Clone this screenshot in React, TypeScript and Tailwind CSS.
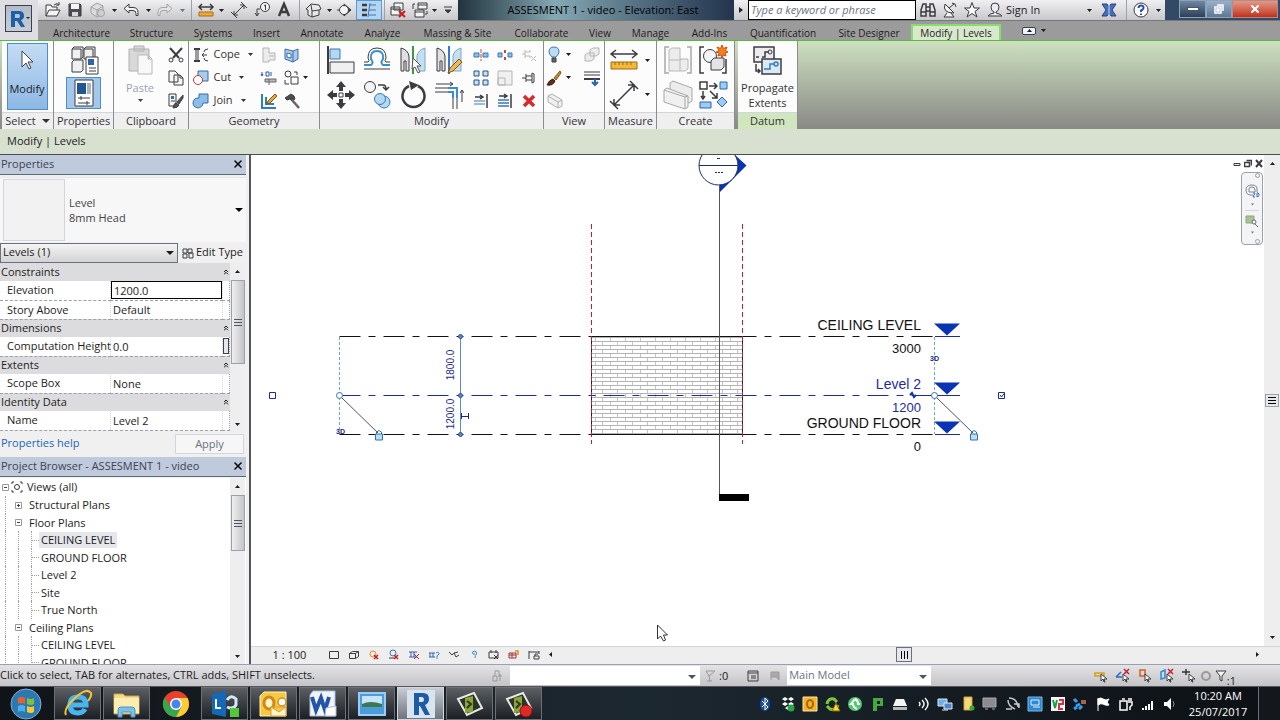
import React from "react";
import { ChevronsUp, X } from "lucide-react";

type Kids = { children?: React.ReactNode };

const Icon = ({ w = 18, h = 18, children }: Kids & { w?: number; h?: number }) => (
  <svg
    width={w}
    height={h}
    viewBox={`0 0 ${w} ${h}`}
    fill="none"
    stroke="#3c3c40"
    className="shrink-0"
    aria-hidden="true"
  >
    {children}
  </svg>
);

const Caret = ({ className = "", big = false }: { className?: string; big?: boolean }) => (
  <svg
    width={big ? 8 : 5}
    height={big ? 4 : 3}
    viewBox={big ? "0 0 8 4" : "0 0 5 3"}
    className={`shrink-0 ${className}`}
    aria-hidden="true"
  >
    <path d={big ? "M0 0h8L4 4z" : "M0 0h5L2.5 3z"} fill="currentColor" />
  </svg>
);

/* ---------- quick access toolbar ---------- */

const quickAccess = [
  {
    label: "Open",
    width: "w-[22px]",
    icon: (
      <Icon>
        <path d="M2 15V4h5l1 2h5v3M2 15l3-6h11l-3 6zM10 4q3-3 5 0M15 1v3h-3" fill="#f4f4f4" />
      </Icon>
    ),
  },
  {
    label: "Save",
    width: "w-[22px]",
    icon: (
      <Icon>
        <path d="M3 3h11l1 1v11H3z" fill="#4a4d55" />
        <path d="M5 3h8v5H5z" fill="#f4f4f4" stroke="none" />
        <path d="M6 11h6v4H6z" fill="#d8d8d8" stroke="none" />
      </Icon>
    ),
  },
  {
    label: "Synchronize",
    width: "w-[24px]",
    icon: (
      <Icon>
        <path d="M2 6l6-4 6 3v7l-6 4-6-4zM2 6l6 3 6-4M8 9v7" fill="#dcdcdc" stroke="#a0a0a4" />
        <circle cx="12" cy="12" r="3.5" fill="#d0d0d0" stroke="#a0a0a4" />
      </Icon>
    ),
  },
  { label: "Synchronize options", width: "w-[8px]", icon: <Caret /> },
  {
    label: "Undo",
    width: "w-[26px]",
    icon: (
      <Icon>
        <path d="M7 3L2 7.500l5 4.500V9.500h4q3 0 3 3v2h2v-3q0-5-5-5H7z" fill="#f4f4f4" />
      </Icon>
    ),
  },
  { label: "Undo list", width: "w-[8px]", icon: <Caret /> },
  {
    label: "Redo",
    width: "w-[26px]",
    icon: (
      <Icon>
        <path d="M11 3l5 4.500-5 4.500V9.500H7q-3 0-3 3v2H2v-3q0-5 5-5h4z" fill="#e4e4e4" stroke="#a4a4a8" />
      </Icon>
    ),
  },
  { label: "Redo list", width: "w-[8px]", icon: <Caret className="text-gray-500" /> },
  { label: "", width: "w-[10px]", icon: null },
  {
    label: "Measure",
    width: "w-[20px]",
    icon: (
      <Icon>
        <path d="M2 6h14M5 3L2 6l3 3M13 3l3 3-3 3" strokeWidth="1.500" />
        <path d="M2 11h14v4H2z" fill="#f0a830" stroke="#a86c14" />
      </Icon>
    ),
  },
  { label: "Measure options", width: "w-[10px]", icon: <Caret /> },
  {
    label: "Aligned Dimension",
    width: "w-[26px]",
    icon: (
      <Icon>
        <path d="M4 14L14 4M4 10v4h4M10 4h4v4M1 11l6 6M11 1l6 6" />
      </Icon>
    ),
  },
  {
    label: "Tag by Category",
    width: "w-[20px]",
    icon: (
      <Icon>
        <circle cx="12" cy="6" r="4.500" fill="#f4f4f4" />
        <path d="M11 5l1.500-1v5M7 8H4v6M2 12l2 3 2-3" />
      </Icon>
    ),
  },
  {
    label: "Text",
    width: "w-[24px]",
    icon: (
      <Icon>
        <path d="M4 15L9 3l5 12M6 11h6" strokeWidth="2.500" />
      </Icon>
    ),
  },
  { label: "", width: "w-[6px]", icon: null },
  {
    label: "Default 3D View",
    width: "w-[22px]",
    icon: (
      <Icon>
        <path d="M2 8l5-5 8 1 2 4-2 1v5l-7 2-4-2V9z" fill="#e8e8e8" />
        <path d="M8 16v-6l7-1M8 10L7 4" />
      </Icon>
    ),
  },
  { label: "3D view options", width: "w-[10px]", icon: <Caret /> },
  {
    label: "Section",
    width: "w-[22px]",
    icon: (
      <Icon>
        <path d="M8 3l7 6-7 6z" fill="#3c3c40" />
        <circle cx="8" cy="9" r="4.500" fill="#f4f4f4" />
        <path d="M1 9h2" />
      </Icon>
    ),
  },
  {
    label: "Thin Lines",
    width: "w-[26px]",
    pressed: true,
    icon: (
      <Icon>
        <path d="M2 4h5M2 9h5M2 14h5" strokeWidth="2.500" />
        <path d="M9 4h7M9 9h7M9 14h7M10 2L8 16" stroke="#3a78b8" />
      </Icon>
    ),
  },
  { label: "", width: "w-[4px]", icon: null },
  {
    label: "Close Hidden Windows",
    width: "w-[24px]",
    icon: (
      <Icon>
        <path d="M5 2h9v7H5zM2 6h9v8H2zM2 8h9" fill="#f4f4f4" />
        <path d="M10 10l6 6M16 10l-6 6" stroke="#c81e1e" strokeWidth="2" />
      </Icon>
    ),
  },
  {
    label: "Switch Windows",
    width: "w-[20px]",
    icon: (
      <Icon>
        <path d="M7 2h9v6H7zM4 9h9v7H4zM4 11h9M7 4h9" fill="#f4f4f4" />
        <path d="M4 3H2v5M14 13h2v-3" />
      </Icon>
    ),
  },
  { label: "Window list", width: "w-[8px]", icon: <Caret /> },
  {
    label: "Customize Quick Access Toolbar",
    width: "w-[20px]",
    icon: (
      <Icon w={8} h={8}>
        <path d="M0 1h8M1 4h6L4 7z" fill="#3c3c40" />
      </Icon>
    ),
  },
];

const infoIcons = [
  {
    label: "Search",
    icon: (
      <Icon>
        <path d="M2 9l2-6h3v12H2zM11 3h3l2 6v6h-5zM7 6h4v4H7zM2 11h5M11 11h5" fill="#e4e4e4" strokeWidth="1.500" />
      </Icon>
    ),
  },
  {
    label: "Communication Center",
    icon: (
      <Icon>
        <path d="M4 3q-3 9 9 9zM6 12l-3 4h10l-3-4" fill="#f4f4f4" />
        <path d="M8 7l5-4M11 2q4 0 4 4" />
      </Icon>
    ),
  },
  {
    label: "Favorites",
    icon: (
      <Icon>
        <path d="M9 1.500l2 5.500h5.500L12 10.500l2 5.500-5-3.500L4 16l2-5.500L1.500 7H7z" fill="#f8f8f8" />
      </Icon>
    ),
  },
];

const Titlebar = () => (
  <div className="flex h-[21px] items-stretch border-b border-[#77777a] bg-gradient-to-b from-[#f0f0f2] to-[#c8c8cc]">
    <div className="flex items-center pl-1">
      {quickAccess.map((item, index) =>
        item.icon ? (
          <button
            key={index}
            aria-label={item.label}
            className={`flex h-5 items-center justify-center ${item.width} ${
              item.pressed ? "border border-[#5a9ad4] bg-[#b4d4f0]" : ""
            }`}
          >
            {item.icon}
          </button>
        ) : (
          <span key={index} className={`flex h-5 justify-center ${item.width}`}>
            <span className="w-px bg-gray-400" />
          </span>
        ),
      )}
    </div>
    <div className="flex min-w-0 flex-1 items-center justify-center whitespace-nowrap bg-gradient-to-r from-[#22343e] via-[#86a9b4] via-35% to-[#22344c] pl-[14px] text-[11px] text-black">
      ASSESMENT 1 - video - Elevation: East
    </div>
    <button aria-label="Collapse search" className="flex w-[14px] items-center justify-center">
      <Icon w={4} h={6}>
        <path d="M0 0l4 3-4 3z" fill="#222" stroke="none" />
      </Icon>
    </button>
    <input
      aria-label="Search help"
      placeholder="Type a keyword or phrase"
      className="w-[168px] border border-black bg-white px-[2px] text-[11px] italic placeholder:text-gray-500"
    />
    <div className="flex items-center gap-1 pl-[3px]">
      {infoIcons.map((item) => (
        <button key={item.label} aria-label={item.label}>
          {item.icon}
        </button>
      ))}
    </div>
    <button className="ml-[5px] flex w-[106px] items-center gap-[2px] text-[11px]">
      <Icon>
        <path
          d="M9 2q4 0 4 4t-3 5v1q5 1 6 3H2q1-2 6-3v-1Q5 10 5 6t4-4z"
          fill="#ececf0"
        />
      </Icon>
      <span className="whitespace-nowrap">Sign In</span>
      <Caret className="ml-auto" />
    </button>
    <div className="flex items-center border-r border-gray-400 px-2">
      <button aria-label="Exchange Apps">
        <Icon>
          <path d="M2 3h5l2 3 2-3h5l-4 6 4 6h-5l-2-3-2 3H2l4-6z" fill="#4470c0" stroke="#28407c" />
          <path d="M9 3v12" stroke="#c8d8f0" />
        </Icon>
      </button>
    </div>
    <button aria-label="Help" className="flex w-[38px] items-center justify-center gap-[6px]">
      <Icon>
        <circle cx="9" cy="9" r="7" fill="#fff" />
        <path d="M6.500 7q0-2.500 2.500-2.500t2.500 2T9 9.500V11M9 12.500v1.500" stroke="#2850b0" strokeWidth="2" />
      </Icon>
      <Caret />
    </button>
    <div className="flex bg-[#324a66] pl-[14px] pr-[2px]">
      <button
        aria-label="Minimize"
        className="flex h-[18px] w-[27px] items-center justify-center border border-[#8fa3b8] bg-gradient-to-b from-[#7088a4] to-[#2c4058]"
      >
        <span className="h-1 w-3 border border-gray-600 bg-white" />
      </button>
      <button
        aria-label="Restore"
        className="flex h-[18px] w-[26px] items-center justify-center border border-[#8fa3b8] bg-gradient-to-b from-[#9ab0c8] to-[#5c7894]"
      >
        <Icon w={12} h={12}>
          <path d="M4 2h6v6M2 4h6v6H2zM4 6h2v2H4z" stroke="#fff" strokeWidth="1.500" />
        </Icon>
      </button>
      <button
        aria-label="Close"
        className="flex h-[18px] w-[46px] items-center justify-center border border-[#b88] bg-gradient-to-b from-[#e09a88] to-[#c02c18]"
      >
        <X className="size-3 text-white" strokeWidth={4} />
      </button>
    </div>
  </div>
);

const tabs = [
  { name: "Architecture", width: "w-[77px]" },
  { name: "Structure", width: "w-[63px]" },
  { name: "Systems", width: "w-[60px]" },
  { name: "Insert", width: "w-[47px]" },
  { name: "Annotate", width: "w-[64px]" },
  { name: "Analyze", width: "w-[57px]" },
  { name: "Massing & Site", width: "w-[93px]" },
  { name: "Collaborate", width: "w-[75px]" },
  { name: "View", width: "w-[42px]" },
  { name: "Manage", width: "w-[59px]" },
  { name: "Add-Ins", width: "w-[59px]" },
  { name: "Quantification", width: "w-[88px]" },
  { name: "Site Designer", width: "w-[84px]" },
];

const Header = () => (
  <header className="flex h-10 bg-[#9c9b9c]">
    <div className="flex w-[38px] shrink-0 items-start bg-[#dedee2] pl-[5px] pt-[5px]">
      <button
        aria-label="Application menu"
        className="flex size-[27px] items-center justify-center border border-gray-700 bg-gradient-to-b from-[#b4bcc8] to-[#c8ccd4]"
      >
        <Icon w={22} h={20}>
          <path
            d="M3 2h8q5 0 5 5 0 3-3 4l4 7h-4l-4-6H7v6H3zM7 5v4h4q1-1 1-2t-1-2z"
            fill="#1d5fa8"
            stroke="none"
          />
          <path d="M18 8h4l-2 2z" fill="#222" stroke="none" />
        </Icon>
      </button>
    </div>
    <div className="min-w-0 flex-1">
      <Titlebar />
      <nav className="flex h-[19px] items-stretch whitespace-nowrap pl-[5px] text-[10px]">
        {tabs.map((tab) => (
          <button key={tab.name} className={`pt-[5px] leading-[14px] text-[#1c1c1c] ${tab.width}`}>
            {tab.name}
          </button>
        ))}
        <button className="mt-[3px] w-[90px] border-2 border-b-0 border-[#86dc6c] bg-[#d8e8cc] leading-[14px]">
          Modify | Levels
        </button>
        <button aria-label="Ribbon display" className="ml-[21px] flex items-center gap-[5px]">
          <span className="flex h-2 w-[14px] items-center justify-center rounded-xs border border-gray-700 bg-gray-100">
            <Caret className="rotate-180" />
          </span>
          <Caret />
        </button>
      </nav>
    </div>
  </header>
);

/* ---------- ribbon ---------- */

const Panel = ({
  title,
  className,
  accent,
  children,
}: Kids & { title: React.ReactNode; className: string; accent?: boolean }) => (
  <section className={`flex shrink-0 flex-col border-r border-[#8c8c90] bg-[#fcfcfc] ${className}`}>
    <div className="flex h-[71px] justify-center pt-[2px]">{children}</div>
    <h2
      className={`flex h-[17px] items-center justify-center border-t border-gray-300 text-[11px] text-[#333] ${
        accent ? "bg-[#cfe6bf]" : "bg-[#efefef]"
      }`}
    >
      {title}
    </h2>
  </section>
);

const Tool = ({ label, children }: Kids & { label: string }) => (
  <button aria-label={label} className="flex items-center justify-center">
    {children}
  </button>
);

const TextTool = ({ label, children }: Kids & { label: string }) => (
  <button className="flex items-center gap-1 text-[11px] text-[#333]">
    {children}
    {label}
    <Caret className="ml-1" />
  </button>
);

const ClipboardPanel = () => (
  <Panel title="Clipboard" className="w-[75px]">
    <button className="flex w-[50px] flex-col items-center text-[11px] text-gray-400">
      <Icon w={30} h={34}>
        <path d="M4 6h20v22H4zM9 3h10v5H9z" fill="#d8d8d8" stroke="#b0b0b0" />
        <path d="M13 12h10l4 4v15H13zM23 12v4h4" fill="#f8f8f8" stroke="#b8b8b8" />
      </Icon>
      <span className="mt-[3px] leading-4">Paste</span>
      <Caret className="mt-[3px] text-gray-700" />
    </button>
    <div className="grid w-[22px] grid-rows-3">
      <Tool label="Cut">
        <Icon>
          <path d="M3 2l9 10M15 2L6 12" strokeWidth="2" />
          <circle cx="4" cy="14" r="2" />
          <circle cx="14" cy="14" r="2" />
        </Icon>
      </Tool>
      <Tool label="Copy">
        <Icon>
          <path d="M2 2h6l3 3v8H2zM7 6h6l3 3v7H7zM13 6v3h3" fill="#f8f8f8" />
        </Icon>
      </Tool>
      <Tool label="Match Type">
        <Icon>
          <path d="M2 2h7v12H2zM4 9h4" fill="#f8f8f8" />
          <path d="M4 4h3v3H4z" fill="#3a6ca8" stroke="none" />
          <path d="M16 3l-6 7 2 2 4-6zM9 11q-2 0-3 5 5 0 6-3z" fill="#555" />
        </Icon>
      </Tool>
    </div>
  </Panel>
);

const GeometryPanel = () => (
  <Panel title="Geometry" className="w-[131px]">
    <div className="grid w-[66px] grid-rows-3">
      <TextTool label="Cope">
        <Icon>
          <path d="M2 3h6M2 15h6" strokeWidth="2" />
          <path d="M4 3v12M6 3v12M10 9h5M12 7l-2 2 2 2M16 3q-4 0-4 3M16 15q-4 0-4-3" />
        </Icon>
      </TextTool>
      <TextTool label="Cut">
        <Icon>
          <path d="M6 2h10v10H6z" fill="#a8ccec" stroke="#3a6ca8" />
          <circle cx="6" cy="11" r="4.500" fill="#fff" stroke="#d03030" />
        </Icon>
      </TextTool>
      <TextTool label="Join">
        <Icon>
          <path d="M7 2h9v9h-5a5 5 0 1 1-4-5z" fill="#8cbce8" stroke="#3a6ca8" />
        </Icon>
      </TextTool>
    </div>
    <div className="grid w-[22px] grid-rows-3">
      <Tool label="Wall Joins">
        <Icon>
          <path d="M3 2h6v5h6v7H9v2H3zM9 10h5" fill="#ececec" stroke="#b4b4b4" />
        </Icon>
      </Tool>
      <Tool label="Beam Joins">
        <Icon>
          <path d="M2 3v4M1 5l1 2 1-2M6 3h3v4H6zM11 3v4" stroke="#2a5ca8" />
          <path d="M5 10h11v3H5zM9 10v6" fill="#bbb" stroke="#666" />
        </Icon>
      </Tool>
      <Tool label="Unjoin">
        <Icon>
          <path d="M2 2v14h14M6 5v7h8" stroke="#2f7cc4" strokeWidth="2" />
          <path d="M15 2l2 2-7 7-3 1 1-3z" fill="#e8a838" stroke="#7c5414" />
        </Icon>
      </Tool>
    </div>
    <div className="grid w-[37px] grid-rows-3 justify-items-start pl-[3px]">
      <Tool label="Paint face">
        <Icon>
          <path d="M2 3l8 2 5-2v10l-5 3-8-3zM10 5v11" fill="#a8ccec" stroke="#3a6ca8" />
          <path d="M4 7l4 1v4l-4-1z" fill="#fff" stroke="#3a6ca8" />
        </Icon>
      </Tool>
      <button aria-label="Split face" className="flex items-center gap-[2px]">
        <Icon>
          <circle cx="5" cy="5" r="3" />
          <path d="M8 8h7v7H8zM2 11v4h4M11 3h3v3" />
        </Icon>
        <Caret />
      </button>
      <Tool label="Demolish">
        <Icon>
          <path d="M2 6l6-4 3 2 1 3-3 2-2-2-3 1z" fill="#4c4c50" />
          <path d="M9 8l7 8" strokeWidth="2.500" stroke="#6c6460" />
        </Icon>
      </Tool>
    </div>
  </Panel>
);

const ModifyPanel = () => (
  <Panel title="Modify" className="w-[224px]">
    <div className="grid w-36 grid-cols-4 grid-rows-2">
      <Tool label="Align">
        <Icon w={30} h={30}>
          <path d="M2 1v28" strokeWidth="2" />
          <path d="M4 4h10v10H4z" fill="#b4d8f0" stroke="#3a78b8" />
          <path d="M4 17h24v11H4z" fill="#f0f0f0" />
        </Icon>
      </Tool>
      <Tool label="Offset">
        <Icon w={30} h={30}>
          <path d="M2 20h7q3-2 0-6-1-8 6-8t6 8q-3 4 0 6h7" stroke="#3a8cd0" strokeWidth="2" />
          <path d="M2 24h26M2 17h4q2-1 0-4Q6 3 15 3t9 10q-2 3 0 4h4" />
        </Icon>
      </Tool>
      <Tool label="Mirror - Pick Axis">
        <Icon w={30} h={30}>
          <path d="M3 3q7 2 8 8v15H8V16H6v10H3z" fill="#e0e0e4" />
          <path d="M27 3q-7 2-8 8v15h8z" fill="#c4e0f0" stroke="#7ca8c4" />
          <path d="M15 1v28" stroke="#3c9c3c" strokeWidth="2" />
          <path d="M15 13l8 8h-4l3 6-2 1-3-6-3 2z" fill="#fff" stroke="#555" />
        </Icon>
      </Tool>
      <Tool label="Mirror - Draw Axis">
        <Icon w={30} h={30}>
          <path d="M3 3q7 2 8 8v15H8V16H6v10H3z" fill="#e0e0e4" />
          <path d="M27 3q-7 2-8 8v15h8z" fill="#c4e0f0" stroke="#7ca8c4" />
          <path d="M15 1v28" stroke="#2f7cd0" strokeWidth="2" />
          <path d="M25 14l3 3-9 9-5 2 2-5z" fill="#f0b850" stroke="#7c5414" />
        </Icon>
      </Tool>
      <Tool label="Move">
        <Icon w={30} h={30}>
          <path
            d="M15 1l5 6h-3v4h-4V7h-3zM15 29l5-6h-3v-4h-4v4h-3zM1 15l6-5v3h4v4H7v3zM29 15l-6-5v3h-4v4h4v3z"
            fill="#3c3c40"
            stroke="none"
          />
          <path d="M13 13h4v4h-4z" />
        </Icon>
      </Tool>
      <Tool label="Copy">
        <Icon w={30} h={30}>
          <circle cx="8" cy="7" r="5.500" fill="#f4f4f4" />
          <path d="M16 5h5q3 0 3 4M21 7l3 3 3-3" strokeWidth="1.500" />
          <circle cx="22" cy="22" r="6" fill="#b4d8f0" stroke="#3a78b8" />
          <circle cx="18" cy="19" r="5.500" fill="#b4d8f0" stroke="#3a78b8" />
        </Icon>
      </Tool>
      <Tool label="Rotate">
        <Icon w={30} h={30}>
          <path d="M20 6a11 11 0 1 1-9 0" strokeWidth="2.500" />
          <path d="M11 1l10 4-8 5z" fill="#3c3c40" stroke="none" />
        </Icon>
      </Tool>
      <Tool label="Trim/Extend to Corner">
        <Icon w={30} h={30}>
          <path d="M1 8h13M1 12h13M19 18v11M23 18v11M2 4h17M16 2l3 2-3 2M28 22V10M26 13l2-3 2 3" />
          <path d="M14 8h9v10M14 12h5v6" stroke="#3a8cd0" strokeWidth="2" />
        </Icon>
      </Tool>
    </div>
    <div className="ml-[2px] grid w-[72px] grid-cols-3 grid-rows-3">
      <Tool label="Split Element">
        <Icon>
          <path d="M2 7h5v4H2zM11 7h5v4h-5z" fill="#8cc0e8" stroke="#3a78b8" />
          <path d="M9 3v12" stroke="#d04828" strokeDasharray="4 1" />
        </Icon>
      </Tool>
      <Tool label="Split with Gap">
        <Icon>
          <path d="M2 7h4v4H2zM12 7h4v4h-4z" fill="#8cc0e8" stroke="#3a78b8" />
          <path d="M9 4v3M9 11v3" stroke="#d04828" strokeWidth="2" />
        </Icon>
      </Tool>
      <Tool label="Unpin">
        <Icon>
          <path d="M2 8h3M5 4v8M5 6h5V4M5 10h5v2M11 10l5 5M16 10l-5 5" stroke="#b8b8b8" />
        </Icon>
      </Tool>
      <Tool label="Array">
        <Icon>
          <path d="M2 2h5v5H2zM11 2h5v5h-5zM2 11h5v5H2zM11 11h5v5h-5z" fill="#c8e0f4" stroke="#2a5088" />
        </Icon>
      </Tool>
      <Tool label="Scale">
        <Icon>
          <path d="M2 2h14v14H2zM2 9h7v7H2z" fill="#f0f0f0" stroke="#b4b4b4" />
        </Icon>
      </Tool>
      <Tool label="Pin">
        <Icon>
          <path d="M2 9h4M6 5v8M6 7h6M6 11h6M12 4l2 1v8l-2 1z" />
        </Icon>
      </Tool>
      <Tool label="Trim Single">
        <Icon>
          <path d="M3 5h8M8 3l3 2-3 2M15 2v14" strokeWidth="1.500" />
          <path d="M2 9h11M2 12h11" stroke="#3a78b8" />
        </Icon>
      </Tool>
      <Tool label="Trim Multiple">
        <Icon>
          <path d="M3 4h8M8 2l3 2-3 2M15 2v14" strokeWidth="1.500" />
          <path d="M2 8h11M2 11h11M2 14h11" stroke="#3a78b8" strokeWidth="1.500" />
        </Icon>
      </Tool>
      <Tool label="Delete">
        <Icon>
          <path d="M4 4l10 10M14 4L4 14" stroke="#d42a30" strokeWidth="3.500" />
        </Icon>
      </Tool>
    </div>
  </Panel>
);

const ViewPanel = () => (
  <Panel title="View" className="w-[61px]">
    <div className="grid w-[30px] grid-rows-3 justify-items-start">
      <button aria-label="Hide in View" className="flex items-center gap-1">
        <Icon w={16}>
          <path d="M8 1q5 0 5 5 0 2-3 5H6Q3 8 3 6q0-5 5-5z" fill="#bcdcf4" stroke="#3a78b8" />
          <path d="M6 12h4v4H6z" fill="#666" />
        </Icon>
        <Caret />
      </button>
      <button aria-label="Override Graphics" className="flex items-center gap-1">
        <Icon w={16}>
          <path d="M14 2L8 9l2 2 5-7z" fill="#c88c40" stroke="#7c5414" />
          <path d="M7 10q-4 1-6 6 6 1 8-4z" fill="#5c3018" stroke="#3c2010" />
        </Icon>
        <Caret />
      </button>
      <Tool label="Linework">
        <Icon>
          <path d="M2 4l4-2 10 6v6l-4 2-10-6zM2 4l10 6v6M12 10l4-2" fill="#f0f0f0" stroke="#b0b0b0" />
        </Icon>
      </Tool>
    </div>
    <div className="ml-[6px] grid w-5 grid-rows-3">
      <Tool label="Displace Elements">
        <Icon>
          <path d="M7 4l3-2h6v6l-3 2H7zM2 9l3-2h6v6l-3 2H2z" fill="#ececec" stroke="#b4b4b4" />
        </Icon>
      </Tool>
      <Tool label="Line Weight">
        <Icon>
          <path d="M1 3h16M1 6h16" />
          <path d="M1 10h16" strokeWidth="2" />
          <path d="M12 10v5M9 13l3 3 3-3" stroke="#2a64b4" strokeWidth="2" />
        </Icon>
      </Tool>
    </div>
  </Panel>
);

const MeasurePanel = () => (
  <Panel title="Measure" className="w-[52px]">
    <div className="grid w-11 grid-rows-2">
      <button aria-label="Measure Between" className="flex items-center gap-[6px]">
        <Icon w={30} h={30}>
          <path d="M2 9h26M7 5L2 9l5 4M23 5l5 4-5 4" strokeWidth="1.500" />
          <path d="M2 17h26v7H2zM6 17v3M10 17v3M14 17v3M18 17v3M22 17v3" fill="#f4b838" stroke="#9c6814" />
        </Icon>
        <Caret />
      </button>
      <button aria-label="Aligned Dimension" className="flex items-center gap-[6px]">
        <Icon w={30} h={30}>
          <path d="M5 25L25 5M5 19v6h6M19 5h6v6M1 21l8 8M21 1l8 8" strokeWidth="1.500" />
        </Icon>
        <Caret />
      </button>
    </div>
  </Panel>
);

const CreatePanel = () => (
  <Panel title="Create" className="w-[78px]">
    <div className="grid w-[70px] grid-cols-2 grid-rows-2">
      <Tool label="Create Assembly">
        <Icon w={30} h={30}>
          <path d="M6 2H2v26h4M24 2h4v26h-4" stroke="#a8a8a8" strokeWidth="1.500" />
          <path d="M6 5l3-2h8v11h8v10l-3 2H6zM6 15h11v11M17 15l2-1" fill="#ececec" stroke="#b8b8b8" />
        </Icon>
      </Tool>
      <Tool label="Create Group">
        <Icon w={30} h={30}>
          <path d="M6 2H2v26h4M24 28h4V14" strokeWidth="1.500" />
          <circle cx="12" cy="11" r="6.500" fill="#f4f4f4" />
          <path d="M13 16l3-3h10v9l-3 3H13z" fill="#e4e4e8" />
          <path d="M24 0l1.500 3.500L29 2l-1.500 3.500L30 7l-3 1 1 3-3-1-1 3-1-3-3 1 1-3-3-1 3-1.500L19 2l3.500 1.500z" fill="#f08020" stroke="#d05010" />
        </Icon>
      </Tool>
      <Tool label="Create Parts">
        <Icon w={30} h={30}>
          <path d="M7 3l3-2 19 7v13l-3 2-19-7z" fill="#ececec" stroke="#a8a8a8" />
          <path d="M1 10l3-2 21 8v11l-3 2L1 22zM1 10l21 7v12M22 17l3-1" fill="#f0f0f0" stroke="#a8a8a8" />
        </Icon>
      </Tool>
      <Tool label="Create Similar">
        <Icon w={30} h={30}>
          <path d="M2 2h7v7H2zM11 6h8M16 3l3 3-3 3M5 11v8M3 16l2 3 2-3M12 11l7 7M19 13v5h-5" strokeWidth="1.500" />
          <path d="M22 2h7v7h-7zM2 22h11v6H2zM24 17l5 5-5 5-5-5z" fill="#9cccf0" stroke="#2a64b4" />
        </Icon>
      </Tool>
    </div>
  </Panel>
);

const Ribbon = () => (
  <div className="flex h-[89px] shrink-0 overflow-hidden border-t border-[#5cb838] bg-gradient-to-b from-[#cde0c0] to-[#8a8a86] pl-[2px]">
    <Panel
      title={
        <>
          Select <Caret big className="ml-[6px]" />
        </>
      }
      className="w-[52px]"
    >
      <button className="mr-px flex h-[67px] w-[41px] flex-col items-center border border-[#4f8cc8] bg-gradient-to-b from-[#c4dcf4] to-[#8cb8e4] text-[11px]">
        <Icon w={18} h={26}>
          <path d="M4 7v16l4-4 3 6 2-1-3-6h5z" fill="#fff" stroke="#444" />
        </Icon>
        <span className="mt-[11px] leading-4">Modify</span>
      </button>
    </Panel>
    <Panel title="Properties" className="w-[60px]">
      <div className="flex flex-col items-center">
        <button aria-label="Type Properties" className="flex h-[34px] items-center">
          <Icon w={30} h={30}>
            <path d="M3 4l2-2h9v10l-2 2H3zM15 4l2-2h9v10l-2 2h-9zM3 17l2-2h9v10l-2 2H3zM3 4h9v10M15 4h9v10" fill="#f0f0f0" />
            <path d="M17 12h12v17H17zM20 23h7M20 26h7" fill="#fff" />
            <path d="M19 14h6v6h-6z" fill="#2f64a8" stroke="none" />
          </Icon>
        </button>
        <button
          aria-label="Properties"
          className="flex h-8 w-[35px] items-center justify-center border border-[#4f8cc8] bg-[#a4c8ec]"
        >
          <Icon w={22} h={28}>
            <path d="M2 1h18v26H2z" fill="#fff" />
            <path d="M4 4h9v11H4z" fill="#245590" stroke="none" />
            <path d="M14 4h4v11h-4z" fill="#a8b4c4" stroke="none" />
            <path d="M5 19h12M8 17v4M5 24h12M14 22v4" />
          </Icon>
        </button>
      </div>
    </Panel>
    <ClipboardPanel />
    <GeometryPanel />
    <ModifyPanel />
    <ViewPanel />
    <MeasurePanel />
    <CreatePanel />
    <div className="w-[3px]" />
    <Panel title="Datum" accent className="w-[60px]">
      <button className="flex flex-col items-center text-[11px] leading-[15px] text-[#333]">
        <span className="mb-1 mt-px">
          <Icon w={30} h={32}>
            <path d="M2 3h20v15H2zM4 13h3M10 13h3V8h4" fill="#ececf0" strokeWidth="1.500" />
            <circle cx="18" cy="8" r="2" />
            <path d="M10 15h19v15H10z" fill="#dce8f4" strokeWidth="1.500" />
            <path d="M12 25h6v-5h4" stroke="#2f7cd0" strokeWidth="1.500" />
            <circle cx="24" cy="20" r="2" stroke="#2f7cd0" strokeWidth="1.500" />
            <path d="M4 20v7h4M6 25l2 2-2 2" strokeWidth="1.500" />
          </Icon>
        </span>
        Propagate
        <br />
        Extents
      </button>
    </Panel>
  </div>
);

/* ---------- left side palettes ---------- */

const Scrollbar = ({ thumb }: { thumb: string }) => (
  <div className="flex w-[15px] shrink-0 flex-col items-center bg-[#eeeeee]">
    <button aria-label="Scroll up" className="flex h-[17px] items-center">
      <Caret className="rotate-180" />
    </button>
    <div className={`flex w-[14px] flex-col items-center justify-center gap-[2px] border border-gray-400 bg-gradient-to-r from-[#f0f0f0] to-[#c4c4c8] ${thumb}`}>
      <span className="h-px w-2 bg-gray-600" />
      <span className="h-px w-2 bg-gray-600" />
      <span className="h-px w-2 bg-gray-600" />
    </div>
    <button aria-label="Scroll down" className="mt-auto flex h-[15px] items-center">
      <Caret />
    </button>
  </div>
);

const PaletteTitle = ({ title }: { title: string }) => (
  <div className="flex h-5 shrink-0 items-center justify-between border-b border-[#5c6c70] bg-[#bfcadd] pb-px pl-px pr-[2px] text-[11px] text-[#3c4450]">
    {title}
    <button aria-label={`Close ${title}`}>
      <X className="size-3 text-black" strokeWidth={3} />
    </button>
  </div>
);

const groups = [
  {
    name: "Constraints",
    rows: [
      { name: "Elevation", value: "1200.0", active: true },
      { name: "Story Above", value: "Default" },
    ],
  },
  { name: "Dimensions", rows: [{ name: "Computation Height", value: "0.0", more: true }] },
  { name: "Extents", rows: [{ name: "Scope Box", value: "None" }] },
  { name: "Identity Data", rows: [{ name: "Name", value: "Level 2" }] },
] as {
  name: string;
  rows: { name: string; value: string; active?: boolean; more?: boolean }[];
}[];

const PropertiesPalette = () => (
  <section className="flex h-[302px] shrink-0 flex-col">
    <PaletteTitle title="Properties" />
    <button className="mt-[2px] flex h-[65px] items-center border-t border-gray-200 bg-[#f7f7f8] px-[3px] text-left text-[11px] leading-[15px] text-[#444]">
      <span className="mr-1 h-[62px] w-[62px] border border-gray-300 bg-[#f2f2f3]" />
      <span>
        Level
        <br />
        8mm Head
      </span>
      <Caret big className="ml-auto text-black" />
    </button>
    <div className="flex h-[21px] shrink-0 items-center">
      <div className="relative flex">
        <select
          aria-label="Element filter"
          className="h-5 w-[178px] appearance-none border border-gray-500 bg-gradient-to-b from-[#f4f4f4] to-[#d4d4d6] pl-[2px] text-[11px]"
        >
          <option>Levels (1)</option>
        </select>
        <Caret big className="pointer-events-none absolute right-1 top-2" />
      </div>
      <button className="ml-1 flex items-center gap-[2px] whitespace-nowrap text-[11px]">
        <Icon w={12} h={12}>
          <path d="M1 2h4v4H1zM6 2h4v4H6zM1 7h4v4H1zM7 6h4v5H7z" />
        </Icon>
        Edit Type
      </button>
    </div>
    <div className="flex h-[169px] shrink-0 justify-between overflow-hidden bg-[#f0f0f0] pr-px">
      <table className="w-[230px] table-fixed border-collapse self-start text-left text-[11px] leading-4">
        <colgroup>
          <col />
          <col className="w-[112px]" />
          <col className="w-[7px]" />
        </colgroup>
        {groups.map((group) => (
          <tbody key={group.name}>
            <tr className="h-[18px] bg-[#dcdcde]">
              <th colSpan={3} className="p-0 pl-px font-normal">
                <span className="flex items-center justify-between">
                  {group.name}
                  <ChevronsUp className="size-2" strokeWidth={3} />
                </span>
              </th>
            </tr>
            {group.rows.map((row) => (
              <tr key={row.name} className="h-[19px] border-b border-dashed border-gray-400 bg-white">
                <td className="whitespace-nowrap p-0 pl-[7px]">{row.name}</td>
                <td className="border-x border-dotted border-gray-300 p-0">
                  <input
                    aria-label={row.name}
                    defaultValue={row.value}
                    className={`block h-[18px] w-full px-[2px] ${row.active ? "border border-black" : ""}`}
                  />
                </td>
                <td className="border-r border-dotted border-gray-400 p-0">
                  {row.more && (
                    <button
                      aria-label="Associate parameter"
                      className="block h-4 w-[6px] border border-gray-700 bg-gray-200"
                    />
                  )}
                </td>
              </tr>
            ))}
          </tbody>
        ))}
      </table>
      <Scrollbar thumb="h-[84px]" />
    </div>
    <div className="flex flex-1 items-center justify-between pb-[2px] pl-px pr-[2px] text-[11px]">
      <a href="#" className="text-[#2468b4]">
        Properties help
      </a>
      <button className="h-5 w-[69px] border border-gray-300 bg-[#f6f6f6] text-[11px] leading-4 text-gray-500">
        Apply
      </button>
    </div>
  </section>
);

const Expander = ({ open }: { open: boolean }) => (
  <Icon w={7} h={7}>
    <path d="M0.500 0.500h6v6h-6z" stroke="#999" fill="#fff" />
    <path d={open ? "M2 3.500h3" : "M2 3.500h3M3.500 2v3"} stroke="#444" />
  </Icon>
);

const tree = [
  { name: "Structural Plans", open: false, group: true },
  { name: "Floor Plans", open: true, group: true },
  { name: "CEILING LEVEL", selected: true },
  { name: "GROUND FLOOR" },
  { name: "Level 2" },
  { name: "Site" },
  { name: "True North" },
  { name: "Ceiling Plans", open: true, group: true },
  { name: "CEILING LEVEL" },
  { name: "GROUND FLOOR" },
];

const ProjectBrowser = () => (
  <section className="flex min-h-0 flex-1 flex-col">
    <PaletteTitle title="Project Browser - ASSESMENT 1 - video" />
    <div className="mt-px flex min-h-0 flex-1 justify-between bg-white pr-px">
      <ul className="overflow-hidden whitespace-nowrap text-[11px] leading-4">
        <li className="flex h-[18px] items-center gap-[2px] pl-[2px]">
          <Expander open />
          <Icon w={12} h={12}>
            <path d="M1 3V1h2M9 1h2v2M11 9v2H9M3 11H1V9" />
            <circle cx="6" cy="6" r="2.500" />
          </Icon>
          <span className="pl-[2px]">Views (all)</span>
        </li>
        {tree.map((node, index) => (
          <li
            key={index}
            className="ml-[5px] flex h-[18px] items-center border-l border-dotted border-gray-400 odd:h-[17px]"
          >
            {node.group ? (
              <>
                <span className="ml-[9px] mr-[7px]">
                  <Expander open={!!node.open} />
                </span>
                {node.name}
              </>
            ) : (
              <>
                <span className="ml-3 h-full border-l border-dotted border-gray-400" />
                <span className="ml-3 h-full border-l border-dotted border-gray-400" />
                <span className="w-[7px] border-t border-dotted border-gray-400" />
                <span className={`px-[2px] ${node.selected ? "bg-gray-200" : ""}`}>{node.name}</span>
              </>
            )}
          </li>
        ))}
      </ul>
      <Scrollbar thumb="h-14" />
    </div>
  </section>
);

/* ---------- elevation view ---------- */

const BLUE = "#0a34b4";
const LEVEL_DASH = "21 8 7 8";

const levels = [
  { name: "CEILING LEVEL", elevation: "3000", y: 181.5, color: "#111" },
  { name: "Level 2", elevation: "1200", y: 240.5, color: "#1c2c9c" },
  { name: "GROUND FLOOR", elevation: "0", y: 279.5, color: "#111" },
];

const Lock = ({ x, y }: { x: number; y: number }) => (
  <g transform={`translate(${x} ${y})`} stroke="#3a70b0">
    <path d="M-2.500-1v-2q2.500-3 5 0v2" fill="none" />
    <path d="M-3.500-1h7v6h-7z" fill="#b8e0f4" />
  </g>
);

const Elevation = () => (
  <svg className="h-full w-full" role="img" aria-label="East elevation" fill="none">
    <defs>
      <pattern id="brick" x="340" y="182" width="15" height="8" patternUnits="userSpaceOnUse">
        <path d="M0 .5h15M0 4.500h15" stroke="#b4b5b0" />
        <path d="M4.500 1v3M11.500 5v3" stroke="#c4c5c2" />
      </pattern>
    </defs>

    {/* wall */}
    <path d="M340.500 181.500h151v98h-151z" fill="url(#brick)" stroke="#222" />

    {levels.map((level) => (
      <g key={level.name}>
        <path d={`M88.500 ${level.y}H684`} stroke={level.color} strokeDasharray={LEVEL_DASH} />
        <path d={`M684 ${level.y}h25`} stroke="#1c2c9c" />
        <path d={`M683 ${level.y - 13}h26l-13 12z`} fill={BLUE} />
        <g
          fill={level.color}
          textAnchor="end"
          className="font-['Liberation_Sans',Arial,sans-serif]"
        >
          <text x="670" y={level.y - 7} className="text-[14px]">
            {level.name}
          </text>
          <text x="670" y={level.y + 16} className="text-[13px]">
            {level.elevation}
          </text>
        </g>
      </g>
    ))}
    <path d="M338 181.500h155M338 279.500h155" stroke="#111" />

    {/* reference planes */}
    <path d="M340.500 69v220M491.500 69v220" stroke="#c02030" strokeDasharray="5 3" />

    {/* section marker */}
    <path d="M484 0l11.500 10.500L468 38V29z" fill={BLUE} />
    <circle cx="467.500" cy="10.500" r="19.500" fill="#fff" stroke="#1c2c6c" />
    <path d="M448 10.500h39M466 3.500h3" stroke="#1c2c6c" />
    <path d="M464 17.500h8" stroke="#1c2c6c" strokeDasharray="2 1" />
    <path d="M468.500 30v310" stroke="#555" />
    <path d="M468 339h30v7h-30z" fill="#000" />

    {/* grips of the selected level */}
    <path d="M88.500 182v97M683.500 182v97" stroke="#6cacc4" strokeDasharray="3 2" />
    <path d="M90 242l37 36M685 242l37 36" stroke="#555" />
    <circle cx="88.500" cy="240.500" r="3" fill="#fff" stroke="#3a70b0" />
    <circle cx="683.500" cy="240.500" r="3" fill="#fff" stroke="#3a70b0" />
    <Lock x={128} y={280} />
    <Lock x={723} y={280} />
    <path d="M18.500 237.500h6v6h-6z" stroke="#1c2c9c" />
    <path d="M747.500 237.500h6v6h-6zM749 240l1.500 2 3-4" stroke="#1c2c9c" />
    <path d="M659 240l2-2 2 4 2-2" stroke={BLUE} strokeWidth="2" />
    <g fill="#1c2c7c" className="font-['Liberation_Sans',Arial,sans-serif] text-[7px] font-bold">
      <text x="85" y="279">3D</text>
      <text x="679" y="206">3D</text>
    </g>

    {/* temporary dimensions */}
    <path d="M209.500 181v99" stroke="#5c88d4" />
    <g fill="#5c88d4" stroke="#2c4ca0">
      <circle cx="209.500" cy="181.500" r="2" />
      <circle cx="209.500" cy="240.500" r="2" />
      <circle cx="209.500" cy="279.500" r="2" />
    </g>
    <path d="M210.500 258v6M217.500 258v6M210 261.500h7" stroke="#1c2c7c" />
    <g
      fill="#1c2c8c"
      textAnchor="middle"
      className="font-['Liberation_Sans',Arial,sans-serif] text-[10px]"
    >
      <text transform="translate(203 210) rotate(-90)">1800.0</text>
      <text transform="translate(203 259) rotate(-90)">1200.0</text>
    </g>

    {/* pointer */}
    <path d="M406.500 470v14l3-3 3 5 2-1-2-5h4z" fill="#fff" stroke="#333" />
  </svg>
);

const viewControls = [
  { label: "Detail Level", icon: <path d="M1.500 2.500h9v7h-9z" /> },
  { label: "Visual Style", icon: <path d="M1.500 4.500l3-2h6v5l-3 2h-6zM1.500 4.500h6v5M7.500 4.500l3-2" /> },
  {
    label: "Sun Path",
    icon: (
      <>
        <circle cx="5" cy="5" r="3" stroke="#e09020" />
        <path d="M6 6l4 4M10 6l-4 4" stroke="#c02020" strokeWidth="1.500" />
      </>
    ),
  },
  {
    label: "Shadows",
    icon: (
      <>
        <circle cx="5" cy="4" r="3" stroke="#2f7cc4" />
        <path d="M1 9h5" />
        <path d="M6 6l4 4M10 6l-4 4" stroke="#c02020" strokeWidth="1.500" />
      </>
    ),
  },
  {
    label: "Crop View",
    icon: (
      <>
        <path d="M1 3h8M1 8h8M3 3v5M6 3v5" stroke="#2f64b4" />
        <path d="M6 5l5 5M11 5l-5 5" stroke="#c02020" />
      </>
    ),
  },
  {
    label: "Crop Region",
    icon: (
      <>
        <path d="M1 4h6M1 8h6M2 4v4M5 4v4" stroke="#2f64b4" />
        <path d="M8 4q3-2 3 1L9 7v3" stroke="#2f8cd4" />
      </>
    ),
  },
  { label: "Temporary Hide", icon: <path d="M1 3l3 3 2-2 2 4 3-2M6 4l4-1" /> },
  { label: "Reveal Hidden", icon: <path d="M6 2q3 0 2.500 3Q7 6 7 9M6 2Q3 3 5 5h2" stroke="#2f8cd4" /> },
  { label: "Temporary Properties", icon: <path d="M1 3h9v6H1zM3 1v3M8 1v3M6 6l4 4M10 6l-4 4" /> },
  {
    label: "Analytical Model",
    icon: (
      <>
        <path d="M1 4h7v5H1zM4 4v5M1 6h7" stroke="#a03030" />
        <path d="M7 2h3v4" stroke="#e09020" strokeWidth="1.500" />
      </>
    ),
  },
  { label: "Constraints", icon: <path d="M1 2v8M1 3h10M11 2v3M6 7h5v3H6zM7 7V5h3" /> },
];

const ViewArea = () => (
  <main className="flex min-w-0 flex-1 flex-col border-l-2 border-[#55555a] bg-white">
    <div className="flex min-h-0 flex-1">
      <div className="relative min-w-0 flex-1 overflow-hidden">
        <Elevation />
        <div className="absolute right-px top-1 flex flex-col items-end gap-1">
          <div className="flex items-center gap-[3px]">
            <button aria-label="Minimize view">
              <Icon w={8} h={9}>
                <path d="M1 4.500h6v2H1z" fill="#eee" />
              </Icon>
            </button>
            <button aria-label="Restore view">
              <Icon w={8} h={9}>
                <path d="M2.500 1.500h5v5M.5 3.500h5v4h-5z" strokeWidth="1.500" />
              </Icon>
            </button>
            <button aria-label="Close view">
              <Icon w={8} h={9}>
                <path d="M1 1l6 7M7 1L1 8" strokeWidth="2" />
              </Icon>
            </button>
          </div>
          <div className="flex h-[73px] w-[22px] flex-col items-center justify-between rounded border border-gray-400 bg-[#f4f4f6]">
            <span className="mr-[2px] size-[5px] self-end rounded-full border border-gray-400" />
            <button aria-label="Steering wheel" className="flex flex-col items-center gap-1">
              <Icon w={16} h={16}>
                <path d="M13 9V6q0-4-5-4-6 0-6 5t5 5h2M5 9V6q0-2 3-2t3 3v2z" stroke="#7c8494" />
                <path d="M9 10h2l-2 4h2M13 10v4q3-1 2-3t-2-1" stroke="#3a70c0" />
              </Icon>
              <Caret className="size-[3px] text-gray-500" />
            </button>
            <button aria-label="Zoom region" className="flex flex-col items-center gap-1 border-t border-gray-300 pt-1">
              <Icon w={14} h={12}>
                <path d="M1 1h8v7H1z" fill="#a8c494" stroke="#8ca878" />
                <circle cx="9" cy="7" r="2" fill="#fff" stroke="#667" />
                <path d="M10 9l3 3" stroke="#667" />
              </Icon>
              <Caret className="size-[3px] text-gray-500" />
            </button>
            <span className="mr-[2px] size-[5px] self-end rounded-full border border-gray-400" />
          </div>
        </div>
      </div>
      <div className="flex w-4 flex-col items-center justify-between bg-[#eeeeee] py-[7px]">
        <Caret className="rotate-180" />
        <div className="flex h-[13px] w-[14px] flex-col items-center justify-center gap-[2px] border border-gray-400 bg-gray-200">
          <span className="h-px w-2 bg-black" />
          <span className="h-px w-2 bg-black" />
          <span className="h-px w-2 bg-black" />
        </div>
        <Caret />
      </div>
    </div>
    <div className="flex h-[18px] items-center border-t border-gray-300 bg-[#eeeeee] pb-[2px]">
      <button className="w-[77px] whitespace-nowrap text-[11px] leading-4">1 : 100</button>
      <div className="flex gap-2">
        {viewControls.map((control) => (
          <button key={control.label} aria-label={control.label}>
            <Icon w={12} h={12}>
              {control.icon}
            </Icon>
          </button>
        ))}
      </div>
      <Caret className="ml-2 rotate-90" />
      <div className="flex flex-1 justify-center">
        <div className="flex h-[15px] w-4 items-center justify-center gap-[2px] border border-gray-500 bg-gray-200">
          <span className="h-2 w-px bg-black" />
          <span className="h-2 w-px bg-black" />
          <span className="h-2 w-px bg-black" />
        </div>
      </div>
      <Caret className="mr-5 -rotate-90" />
    </div>
  </main>
);

/* ---------- status bar ---------- */

const selectionToggles = [
  { label: "Select Links", color: "#d8a018", d: "M2 5h9v3H2z" },
  { label: "Select Underlay", color: "#2f6cc0", d: "M1 9l5-5M1 9h6", off: true },
  { label: "Select Pinned", color: "#d06020", d: "M3 2h5v6H3z" },
  { label: "Select by Face", color: "#2f8cd4", d: "M2 4l4-2v8l-4 1z", off: true },
  { label: "Drag on Selection", color: "#333333", d: "M1 4h8M5 1v6" },
];

const StatusBar = () => (
  <footer className="flex h-[22px] shrink-0 items-center border-t border-gray-400 bg-gradient-to-b from-[#e4e4e6] to-[#c4c4c8] text-[11px]">
    <span className="w-[486px] whitespace-nowrap">
      Click to select, TAB for alternates, CTRL adds, SHIFT unselects.
    </span>
    <Icon w={24} h={16}>
      <path d="M7 8h4v5H7zM9 8V3h4v4M14 6v7M12 8h4" stroke="#999" />
    </Icon>
    <div className="relative flex">
      <select aria-label="Active workset" className="h-[19px] w-[190px] appearance-none bg-white" />
      <Caret big className="pointer-events-none absolute right-1 top-[9px] text-gray-600" />
    </div>
    <button aria-label="Editing requests" className="flex items-center gap-px pl-[2px]">
      <Icon w={16} h={16}>
        <path d="M4 3h9L7 8zM5 13h5M7 8l1 5" stroke="#999" />
      </Icon>
      <span className="pt-[2px]">:0</span>
    </button>
    <button aria-label="Design Options" className="ml-[17px]">
      <Icon w={16} h={16}>
        <path d="M3 3h10v10H3zM3 5h10M6 8h5M6 10h5" />
      </Icon>
    </button>
    <button aria-label="Exclude Options" className="ml-[6px]">
      <Icon w={16} h={16}>
        <path d="M4 4h8v8l-3-3H4zM4 9v3" fill="#aaa" stroke="#999" />
      </Icon>
    </button>
    <div className="relative ml-[4px] flex">
      <select
        aria-label="Design option"
        className="h-[19px] w-[144px] appearance-none bg-white pl-[2px] text-gray-500"
      >
        <option>Main Model</option>
      </select>
      <Caret big className="pointer-events-none absolute right-1 top-[9px] text-gray-600" />
    </div>
    <div className="ml-auto flex items-center gap-[3px] pr-[44px]">
      <div className="flex gap-[6px]">
        {selectionToggles.map((toggle) => (
          <button key={toggle.label} aria-label={toggle.label}>
            <Icon w={16} h={16}>
              <path d={toggle.d} stroke={toggle.color} strokeWidth="1.500" />
              {toggle.off && <path d="M9 1l5 5M14 1L9 6" stroke="#c82030" strokeWidth="1.500" />}
              <path d="M8 6v7l2-2 1 3h1l-1-3h3z" fill="#fff" />
            </Icon>
          </button>
        ))}
      </div>
      <Icon w={12} h={14}>
        <circle cx="6" cy="7" r="4" stroke="#999" strokeWidth="2" />
      </Icon>
      <button aria-label="Filter" className="flex items-end">
        <Icon w={12} h={14}>
          <path d="M1 2h10L7 7v5l-2-1V7z" fill="#f4f4f4" />
        </Icon>
        <span className="-mb-1 leading-3">:1</span>
      </button>
    </div>
  </footer>
);

/* ---------- taskbar ---------- */

const Camtasia = ({ children }: Kids) => (
  <Icon w={32} h={30}>
    <path d="M4 10l16-6 8 15-15 7z" fill="#2c3424" stroke="#e8e8e8" strokeWidth="2" />
    <path d="M11 9l8-2v16l-8 1z" fill="#88a438" stroke="none" />
    <path d="M13 12l4 3-4 4" stroke="#2c3424" strokeWidth="2" />
    {children}
  </Icon>
);

const pinned = [
  {
    label: "Internet Explorer",
    open: true,
    icon: (
      <Icon w={32} h={30}>
        <path d="M8 16h16q0-8-8-8t-8 8 8 8q5 0 7-4" stroke="#48b4f0" strokeWidth="5" />
        <path d="M4 26Q1 20 13 9T29 4q1 3-3 8" stroke="#f4c430" strokeWidth="2" />
      </Icon>
    ),
  },
  {
    label: "Windows Explorer",
    open: true,
    icon: (
      <Icon w={32} h={30}>
        <path d="M3 5h9l2 2h14v18H3z" fill="#f4dc88" stroke="#c8a448" />
        <path d="M3 9h25v15H3z" fill="#fceeb0" stroke="none" />
        <path d="M7 28v-7q0-3 3-3h11q3 0 3 3v7h-4v-5h-9v5z" fill="#7cc0e8" stroke="#4c94c4" />
      </Icon>
    ),
  },
  {
    label: "Chrome",
    open: false,
    icon: (
      <Icon w={32} h={30}>
        <circle cx="16" cy="15" r="13" fill="#e8402c" stroke="none" />
        <path d="M4.700 8.500A13 13 0 0 0 16 28l5.500-10h-11z" fill="#34a850" stroke="none" />
        <path d="M16 28A13 13 0 0 0 27.500 9H16l5.500 9z" fill="#fccc30" stroke="none" />
        <circle cx="16" cy="15" r="6" fill="#fff" stroke="none" />
        <circle cx="16" cy="15" r="4.500" fill="#4484f0" stroke="none" />
      </Icon>
    ),
  },
  {
    label: "Lync",
    open: true,
    icon: (
      <Icon w={32} h={30}>
        <path d="M3 5l14-3v26L3 25z" fill="#1468b8" stroke="none" />
        <path d="M7 10v9h5" stroke="#fff" strokeWidth="2" />
        <path d="M18 11q4-6 9-1v6q-3 5-9 2" stroke="#d4e8f8" strokeWidth="3" />
        <path d="M21 19h9v9h-9z" fill="#54c83c" stroke="none" />
      </Icon>
    ),
  },
  {
    label: "Outlook",
    open: true,
    icon: (
      <Icon w={32} h={30}>
        <path d="M6 3h22v24H2V7z" fill="#f8c840" stroke="#fff4c8" />
        <ellipse cx="11" cy="14" rx="5" ry="6" fill="#fff4c8" stroke="#d08818" strokeWidth="3" />
        <circle cx="24" cy="13" r="4" fill="#fff" stroke="#d49020" strokeWidth="1.500" />
        <path d="M13 18h15v9H13zM13 18l8 5 7-5" fill="#fff4c8" stroke="#d4a040" />
      </Icon>
    ),
  },
  {
    label: "Word",
    open: true,
    icon: (
      <Icon w={32} h={30}>
        <path d="M6 2h22v25H3V6z" fill="#f0f4fc" stroke="#a8bce0" />
        <path d="M5 8l4 13 5-12 4 12 4-13" stroke="#2454a8" strokeWidth="4" />
        <path d="M19 19l10-2v10H18z" fill="#fff" stroke="#a8bce0" />
      </Icon>
    ),
  },
  {
    label: "Photo Viewer",
    open: true,
    icon: (
      <Icon w={32} h={30}>
        <path d="M3 4h26v22H3z" fill="#4c9cdc" stroke="#98ccf0" strokeWidth="2" />
        <path d="M6 7h20v9H6z" fill="#c4e4f8" stroke="none" />
        <path d="M6 15q8-4 20 0v3H6z" fill="#3c7850" stroke="none" />
      </Icon>
    ),
  },
  {
    label: "Revit",
    open: true,
    active: true,
    icon: (
      <Icon w={32} h={30}>
        <path d="M2 1h28v28H2z" fill="#d8e4f0" stroke="none" />
        <path
          d="M9 4h9q6 0 6 6 0 4-4 6l5 10h-5l-5-9h-1v9H9zM14 8v5h3q2 0 2-2.500T17 8z"
          fill="#1c5ca4"
          stroke="none"
        />
      </Icon>
    ),
  },
  { label: "Camtasia Studio", open: true, icon: <Camtasia /> },
  {
    label: "Camtasia Recorder",
    open: true,
    icon: (
      <Camtasia>
        <circle cx="23" cy="22" r="6" fill="#e02828" stroke="#801010" />
      </Camtasia>
    ),
  },
];

const tray = [
  {
    label: "Bluetooth",
    icon: (
      <>
        <ellipse cx="8" cy="8" rx="5" ry="7" fill="#1c4ca0" stroke="none" />
        <path d="M5 5l6 6-3 3V2l3 3-6 6" stroke="#fff" />
      </>
    ),
  },
  {
    label: "Dropbox",
    icon: (
      <>
        <path d="M5 1l3 2-3 2-3-2zM11 1l3 2-3 2-3-2zM5 6l3 2-3 2-3-2zM11 6l3 2-3 2-3-2zM8 10l3 2-3 2-3-2z" fill="#fff" stroke="none" />
        <circle cx="11" cy="12" r="3.500" fill="#28a848" stroke="none" />
      </>
    ),
  },
  {
    label: "Outlook",
    icon: (
      <>
        <path d="M1 1h14v14H1z" fill="#f4b428" stroke="#fce8a0" />
        <ellipse cx="8" cy="8" rx="3" ry="4" stroke="#a86410" strokeWidth="2" />
      </>
    ),
  },
  {
    label: "Sync",
    icon: (
      <>
        <path d="M2 8q1-6 7-5l3 3M13 9q-2 6-8 4l-3-3" stroke="#7cc838" strokeWidth="3" />
        <path d="M11 7l4 8H7z" fill="#fcdc30" stroke="#806000" />
      </>
    ),
  },
  {
    label: "Updater",
    icon: (
      <>
        <circle cx="8" cy="8" r="7" fill="#54c870" stroke="none" />
        <path d="M8 3L4 8h2q0 3 4 5M8 3q3 1 3 5h2" stroke="#fff" strokeWidth="2" />
      </>
    ),
  },
  {
    label: "Paper",
    icon: (
      <>
        <path d="M3 2h10v8H7v5H3z" fill="#48a840" stroke="none" />
        <path d="M7 5h3v3H7z" fill="#123" stroke="none" />
      </>
    ),
  },
  {
    label: "Drive",
    icon: (
      <>
        <path d="M4 3h8l3 7H1z" fill="#f4f4f4" stroke="none" />
        <path d="M1 11h14v3H1z" fill="#b8b8bc" stroke="none" />
      </>
    ),
  },
  {
    label: "Audio",
    icon: (
      <path d="M4 6q2 2 0 4M7 4q4 4 0 8M10 2q6 6 0 12" stroke="#f4f4f4" strokeWidth="1.500" />
    ),
  },
  {
    label: "Remote",
    icon: (
      <>
        <path d="M1 3h9v7H1z" fill="#6cb0e8" stroke="#d8e8f8" />
        <path d="M7 7h8v6H7zM5 14h6" fill="#4c88d0" stroke="#e8e8e8" />
      </>
    ),
  },
  {
    label: "Folder",
    icon: (
      <>
        <path d="M4 1h8v13H4z" fill="#f4d878" stroke="#c8a040" />
        <circle cx="12" cy="12" r="2.500" fill="#38a838" stroke="none" />
      </>
    ),
  },
  {
    label: "Display",
    icon: <path d="M1 2h13v9H1zM3 13h3M10 13h3" fill="#8c8c90" stroke="#a8a8ac" />,
  },
  {
    label: "Webcam",
    icon: <path d="M4 2q8 0 9 9M3 4q0 6 7 9M1 13h6M9 8h5v4" stroke="#c8c8cc" strokeWidth="1.500" />,
  },
  {
    label: "Intel",
    icon: (
      <>
        <path d="M1 1h14v14H1z" fill="#2c88d0" stroke="#78b8e8" />
        <path d="M4 4h8v5H4zM6 11h7" stroke="#e0f0fc" />
      </>
    ),
  },
  {
    label: "VNC",
    icon: (
      <>
        <path d="M1 1h14v14H1z" fill="#f8f8f8" stroke="none" />
        <path d="M3 4l2 8 2-8" stroke="#18a048" strokeWidth="2" />
        <path d="M9 4h4v4H9v5h4" stroke="#d83048" strokeWidth="2" />
      </>
    ),
  },
  {
    label: "Network tools",
    icon: (
      <>
        <path d="M2 3l3 3M4 10l4-2M2 13l3-2M7 13l3-3" stroke="#38a0e8" strokeWidth="3" />
        <path d="M9 4h5v4H9z" fill="#a06450" stroke="none" />
      </>
    ),
  },
  {
    label: "Action Center",
    icon: <path d="M3 2v13M3 3q3-2 5 0 3 2 6 0l-2 3 2 3q-3 1-6-1-2-1-5 1z" fill="#fff" stroke="#fff" />,
  },
  {
    label: "Power",
    icon: <path d="M3 5h7v9H3zM5 3h3M12 2v3M14 2v3M11 6h4v3l-2 2v3" stroke="#fff" strokeWidth="1.500" />,
  },
  {
    label: "Network",
    icon: <path d="M3 14v-2M6 14v-4M9 14V8M12 14V5" stroke="#fff" strokeWidth="2" />,
  },
  {
    label: "Volume",
    icon: (
      <>
        <path d="M2 6h3l4-4v12l-4-4H2z" fill="#fff" stroke="none" />
        <path d="M11 5q2 3 0 6" stroke="#888" />
      </>
    ),
  },
];

const Taskbar = () => (
  <div className="flex h-[34px] shrink-0 items-stretch border-t border-[#55555a] bg-gradient-to-r from-[#101418] via-[#1c2830] to-[#0c1014]">
    <button aria-label="Start" className="flex w-[51px] items-center justify-center">
      <Icon w={34} h={32}>
        <circle cx="17" cy="16" r="15" fill="#2c78b0" stroke="#7cb0d0" />
        <path d="M9 10q3-2 7 0v6q-4-2-7 0z" fill="#e86030" stroke="none" />
        <path d="M18 10q4 2 7 0v6q-3 2-7 0z" fill="#80c040" stroke="none" />
        <path d="M9 18q3-2 7 0v6q-4-2-7 0z" fill="#48b0f0" stroke="none" />
        <path d="M18 18q4 2 7 0v6q-3 2-7 0z" fill="#f8c830" stroke="none" />
      </Icon>
    </button>
    <div className="ml-[3px] flex gap-[2px]">
      {pinned.map((app) => (
        <button
          key={app.label}
          aria-label={app.label}
          className={`flex w-[47px] items-center justify-center ${
            app.active
              ? "border border-gray-300 bg-gradient-to-b from-[#c8ccd4] to-[#70747c]"
              : app.open
                ? "border border-[#6c7074] bg-gradient-to-b from-[#5c6064] to-[#1c2024]"
                : ""
          }`}
        >
          {app.icon}
        </button>
      ))}
    </div>
    <div className="ml-auto flex w-[421px] items-center justify-between">
      {tray.map((item) => (
        <button key={item.label} aria-label={item.label}>
          <Icon w={16} h={16}>
            {item.icon}
          </Icon>
        </button>
      ))}
    </div>
    <div className="flex w-[80px] flex-col items-center justify-center whitespace-nowrap text-[11px] leading-4 text-white">
      <span>10:20 AM</span>
      <span>25/07/2017</span>
    </div>
    <button aria-label="Show desktop" className="w-[22px] border-l border-gray-500 bg-[#14181c]" />
  </div>
);

export default function App() {
  return (
    <div className="flex h-screen w-full flex-col overflow-hidden bg-[#f0f0f0] font-['Open_Sans','Noto_Sans',sans-serif] text-[#1c1c1c]">
      <Header />
      <Ribbon />
      <div className="flex h-[26px] shrink-0 items-center border-b border-[#4c4c50] bg-[#d8e0d0] pl-[7px] text-[11px]">
        Modify | Levels
      </div>
      <div className="flex min-h-0 flex-1">
        <aside className="flex w-[249px] shrink-0 flex-col bg-[#f0f0f0] pr-[3px]">
          <PropertiesPalette />
          <ProjectBrowser />
        </aside>
        <ViewArea />
      </div>
      <StatusBar />
      <Taskbar />
    </div>
  );
}
